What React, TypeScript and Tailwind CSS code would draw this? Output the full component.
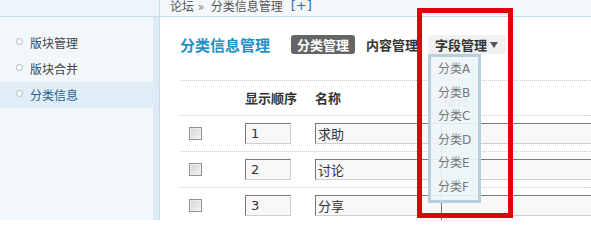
export default function App() {
  const rows = [
    { n: "1", name: "求助" },
    { n: "2", name: "讨论" },
    { n: "3", name: "分享" },
  ];
  const menu = ["版块管理", "版块合并", "分类信息"];
  const drop = ["分类A", "分类B", "分类C", "分类D", "分类E", "分类F"];
  return (
    <div className="relative w-[591px] h-[220px] overflow-hidden bg-white flex flex-col font-['DejaVu_Sans','Noto_Sans_CJK_SC',sans-serif] text-[12px]">
      {/* top bar */}
      <div className="flex h-[17px] shrink-0 border-b border-[#c6dbe8] bg-[#f4f8fb] overflow-hidden">
        <div className="w-[160px] shrink-0 border-r border-[#c6dbe8] bg-[#eef5fa]" />
        <div className="pl-[10px] -mt-[2px] h-[16px] leading-[16px] text-[#555] whitespace-nowrap flex font-['Noto_Sans_CJK_SC',sans-serif]">
          <span>论坛</span>
          <span className="ml-[4px] mr-[7px] text-[#777]">»</span>
          <span>分类信息管理</span>
          <span className="ml-[8px] text-[13px] text-[#2a6fb0] font-['DejaVu_Sans',sans-serif]">[+]</span>
        </div>
      </div>

      <div className="flex flex-1 min-h-0">
        {/* sidebar */}
        <aside className="w-[160px] shrink-0 flex">
          <div className="w-[153px] bg-[#f1f7fb] pt-[13px]">
            {menu.map((m, i) => (
              <div
                key={m}
                className={
                  i === 2
                    ? "h-[26px] flex items-center pl-[16px] bg-[#e1eef8] text-[#2a5f90]"
                    : "h-[26px] flex items-center pl-[16px] text-[#444]"
                }
              >
                <span className="w-[7px] h-[7px] rounded-full border border-[#aeb4b8] bg-white mr-[7px] mb-[3px]" />
                <span className="font-['Noto_Sans_CJK_SC',sans-serif]">{m}</span>
              </div>
            ))}
          </div>
          <div className="w-[6px] bg-[#dcebf6]" />
          <div className="w-px bg-[#c6dae8]" />
        </aside>

        {/* main */}
        <main className="relative flex-1 pl-[20px] font-['Noto_Sans_CJK_SC',sans-serif]">
          <div className="pt-[18px] pb-[26px] border-b border-dotted border-[#c8c8c8]">
            <div className="flex items-center h-[19px] whitespace-nowrap">
              <span className="text-[15px] font-bold text-[#2490c6] leading-none">分类信息管理</span>
              <span className="ml-[21px] h-[19px] px-[6px] rounded-[3px] bg-[#656565] text-white font-bold text-[13px] flex items-center leading-none">
                分类管理
              </span>
              <span className="ml-[11px] font-bold text-[13px] text-[#333] leading-none">内容管理</span>
              <div className="relative ml-[10px] h-[19px] pl-[7px] pr-[8px] rounded-[3px] bg-[#f1f1f1] flex items-center">
                <span className="font-bold text-[13px] text-[#333] leading-none">字段管理</span>
                <span className="ml-[3px] w-0 h-0 border-l-[4px] border-r-[4px] border-t-[6px] border-l-transparent border-r-transparent border-t-[#555]" />
                <div className="absolute top-full left-0 z-10 w-[53px] border-[3px] border-[#b6cfdb] bg-[#edf5f9]/90 pt-[1px] pb-0">
                  {drop.map((d) => (
                    <div key={d} className="h-[23.6px] leading-[23.6px] pl-[7px] text-[12px] text-[#777] font-['DejaVu_Sans','Noto_Sans_CJK_SC',sans-serif]">
                      {d}
                    </div>
                  ))}
                </div>
              </div>
            </div>
          </div>

          {/* table */}
          <div className="flex items-center h-[35px] border-b border-dotted border-[#c8c8c8] font-bold text-[13px] text-[#333] whitespace-nowrap">
            <div className="w-[65px]" />
            <div className="w-[70px]">显示顺序</div>
            <div className="w-[128px]">名称</div>
            <div className="text-[#aaa] mt-[4px]">描述</div>
          </div>
          {rows.map((r) => (
            <div key={r.n} className="flex items-center h-[36px] border-b border-dotted border-[#c8c8c8] whitespace-nowrap">
              <div className="w-[65px] pl-[9px] shrink-0">
                <div className="w-[13px] h-[13px] border border-[#929292] bg-gradient-to-br from-[#d2d2d2] to-[#f6f6f6] shadow-[inset_0_0_0_1px_#eeeeee]" />
              </div>
              <div className="w-[70px] shrink-0">
                <div className="w-[46px] h-[21px] border border-t-[#777] border-l-[#777] border-r-[#cfcfcf] border-b-[#cfcfcf] bg-[#f8f8f8] pl-[5px] flex items-center text-[13px] text-[#333] font-['DejaVu_Sans',sans-serif]">
                  {r.n}
                </div>
              </div>
              <div className="w-[300px] shrink-0 h-[21px] border border-t-[#777] border-l-[#777] border-r-[#cfcfcf] border-b-[#cfcfcf] bg-[#f8f8f8] pl-[2px] flex items-center text-[13px] text-[#333]">
                {r.name}
              </div>
            </div>
          ))}
          <div className="absolute left-[281px] top-[106px] bottom-0 w-px bg-[#777]" />
        </main>
      </div>

      {/* red highlight */}
      <div className="absolute left-[417px] top-[8px] w-[96px] h-[210px] border-[5px] border-[#e2000b] z-20" />
    </div>
  );
}
